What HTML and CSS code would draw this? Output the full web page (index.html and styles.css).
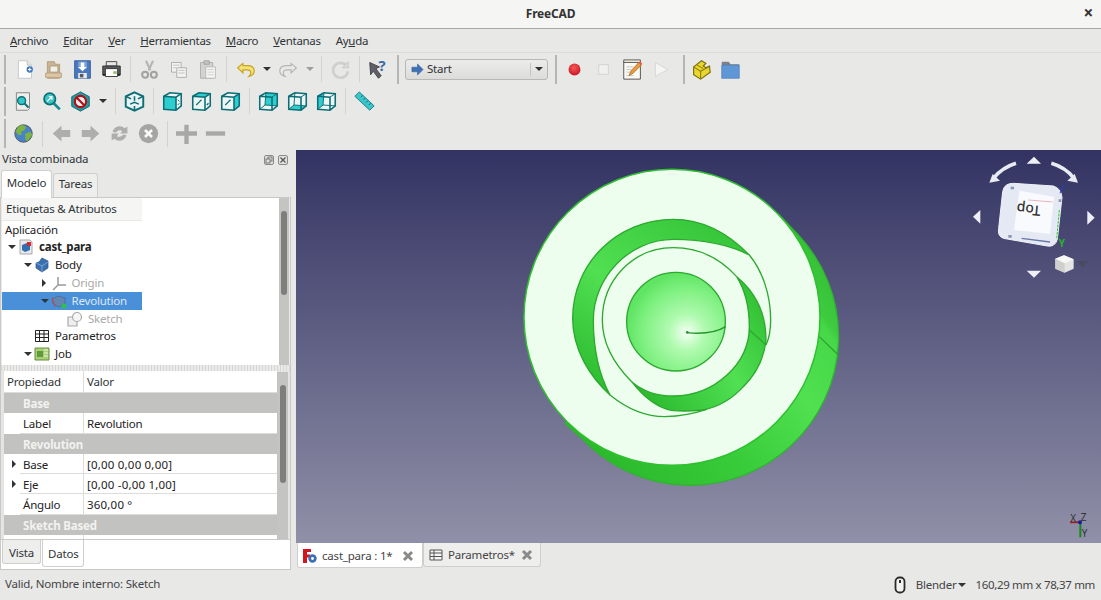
FILE: index.html
```html
<!DOCTYPE html>
<html lang="es">
<head>
<meta charset="utf-8">
<title>FreeCAD</title>
<link rel="stylesheet" href="styles.css">
</head>
<body>
<header class="titlebar"><span class="title">FreeCAD</span><span class="close">×</span></header>
<nav class="menubar">
  <span class="menu"><u>A</u>rchivo</span><span class="menu"><u>E</u>ditar</span><span class="menu"><u>V</u>er</span><span class="menu"><u>H</u>erramientas</span><span class="menu"><u>M</u>acro</span><span class="menu"><u>V</u>entanas</span><span class="menu">Ay<u>u</u>da</span>
</nav>

<div class="toolrow r1">
  <i class="handle"></i>
  <span class="tb"><svg viewBox="0 0 24 24"><path d="M5 2h10l5 5v15H5z" fill="#fff" stroke="#c4c4c4"/><path d="M15 2v5h5" fill="#e4e4e4" stroke="#c4c4c4"/><circle cx="18" cy="12" r="3.6" fill="#3f76c4"/><path d="M16 12h4M18 10v4" stroke="#fff" stroke-width="1.2"/></svg></span>
  <span class="tb"><svg viewBox="0 0 24 24"><path d="M5 3h8l1 3h5v16H5z" fill="#c9b391" stroke="#b09a78"/><path d="M8 8h9v7H8z" fill="#f0efe8" stroke="#a89878"/><path d="M3 16h18v5H3z" fill="#dcc7a4" stroke="#b5a07c"/></svg></span>
  <span class="tb"><svg viewBox="0 0 24 24"><path d="M3 2h18v20H3z" fill="#4a78bd" stroke="#2f5a9c"/><path d="M7 3h10v8H7z" fill="#7fa3d8"/><path d="M10 4h4v5h3l-5 5-5-5h3z" fill="#fff"/><path d="M7 16h10v6H7z" fill="#e6e6e6"/><path d="M9 17h4v4H9z" fill="#55595e"/></svg></span>
  <span class="tb"><svg viewBox="0 0 24 24"><path d="M6 3h12v5H6z" fill="#e6e6e6" stroke="#3a3a3a"/><path d="M2 8h20v10H2z" fill="#56595a" stroke="#2d2d2d"/><path d="M5 11h14v9H5z" fill="#fff" stroke="#2d2d2d"/><path d="M2 18h3M19 18h3" stroke="#222" stroke-width="2"/><path d="M14 14h4v3h-4z" fill="#9dbb6a"/></svg></span>
  <i class="sep"></i>
  <span class="tb"><svg viewBox="0 0 24 24"><path d="M8 2l5 11M16 2l-5 11" stroke="#b4b4b2" stroke-width="2.4" fill="none"/><circle cx="7" cy="18" r="3.4" fill="none" stroke="#a2a2a0" stroke-width="2.4"/><circle cx="17" cy="18" r="3.4" fill="none" stroke="#a2a2a0" stroke-width="2.4"/></svg></span>
  <span class="tb"><svg viewBox="0 0 24 24"><path d="M4 4h11v11H4z" fill="#f3f3f2" stroke="#a8a8a6"/><path d="M10 10h11v11H10z" fill="#f3f3f2" stroke="#a8a8a6"/><path d="M6 7h7M6 10h3M12 13h7M12 16h7" stroke="#bdbdbb"/></svg></span>
  <span class="tb"><svg viewBox="0 0 24 24"><path d="M4 4h14v18H4z" fill="#d2d2d0" stroke="#acacaa"/><path d="M8 2h6v4H8z" fill="#c4c4c2" stroke="#a2a2a0"/><path d="M10 9h11v13H10z" fill="#f5f5f4" stroke="#b6b6b4"/><path d="M12 12h7M12 15h7M12 18h7" stroke="#c9c9c7"/></svg></span>
  <i class="sep"></i>
  <span class="tb"><svg viewBox="0 0 24 24"><path d="M9 5L3 10l6 6v-3.500h5c3 0 4 1.500 4 3.500 0 2-1 3-2 4 4-1 6-3 6-6.500 0-3.500-3-6-8-6H9z" fill="#f4e27a" stroke="#c9a21e" stroke-width="1.300"/></svg></span>
  <span class="dropbtn d14"><i class="caret"></i></span>
  <span class="tb"><svg viewBox="0 0 24 24"><path d="M15 5l6 5-6 6v-3.500h-5c-3 0-4 1.500-4 3.500 0 2 1 3 2 4-4-1-6-3-6-6.500 0-3.500 3-6 8-6h5z" fill="#e9e9e8" stroke="#b5b5b3" stroke-width="1.300"/></svg></span>
  <span class="dropbtn d14"><i class="caret soft"></i></span>
  <i class="sep"></i>
  <span class="tb"><svg viewBox="0 0 24 24"><path d="M19 8a8.500 8.500 0 1 0 1.500 6" fill="none" stroke="#cfcfcd" stroke-width="3"/><path d="M21 3v7h-7z" fill="#dcdcda" stroke="#bdbdbb" stroke-width=".7"/></svg></span>
  <i class="sep"></i>
  <span class="tb"><svg viewBox="0 0 24 24"><path d="M2 4l11 5-4 2 6 8-3 3-6-8-3 4z" fill="#5d6268" stroke="#3a3d42"/><text class="qm" x="12" y="14">?</text></svg></span>
  <i class="sep wide"></i>
  <div class="combo">
    <svg class="combo-ic" viewBox="0 0 14 14"><path d="M1 4.500h6V1l6 6-6 6V9.500H1z" fill="#3f72b5" stroke="#305c96" stroke-width=".6"/></svg>
    <span class="combo-text">Start</span>
    <span class="combo-arrow"><i class="caret"></i></span>
  </div>
  <i class="sep wide"></i>
  <span class="tb"><svg viewBox="0 0 24 24"><defs><radialGradient id="rec" cx=".45" cy=".35" r=".7"><stop offset="0" stop-color="#f45a5a"/><stop offset="1" stop-color="#c8101c"/></radialGradient></defs><circle cx="12" cy="12" r="6.800" fill="url(#rec)"/></svg></span>
  <span class="tb"><svg viewBox="0 0 24 24"><path d="M6.500 6.500h11v11h-11z" fill="#f0f0ef" stroke="#d0d0ce"/></svg></span>
  <span class="tb"><svg viewBox="0 0 24 24"><path d="M2 3h19v20H2z" fill="#fafaf6" stroke="#44423c"/><path d="M2 1h19v3H2z" fill="#e9e5d8" stroke="#55524a"/><path d="M5 9h8M5 12h6M5 15h5M5 19h8" stroke="#bfbfb8"/><path d="M8 19l2-5 9-10 3 3-9 9z" fill="#ea9a3e" stroke="#a9641c" stroke-width=".8"/><path d="M19 4l2-1.500 2 3-1 1.500z" fill="#e8544d"/></svg></span>
  <span class="tb"><svg viewBox="0 0 24 24"><path d="M5 4l14 8-14 8z" fill="#f5f5f4" stroke="#d4d4d2"/></svg></span>
  <i class="sep wide far"></i>
  <span class="tb"><svg viewBox="0 0 24 24"><path d="M3 9l9-7 5 3-3 3 3 2 4-2 1 7-11 8-8-5z" fill="#e9d62f" stroke="#7a6c0c" stroke-width="1.300"/><path d="M3 9l8 5v9M11 14l11-6M7 7l7 4" stroke="#8b7c10" stroke-width="1.200" fill="none"/></svg></span>
  <span class="tb"><svg viewBox="0 0 24 24"><path d="M2 3h8l2 3h10v16H2z" fill="#7c7f86"/><path d="M2 7h20v15H2z" fill="#5f97d6" stroke="#4a7fba" stroke-width=".7"/></svg></span>
</div>

<div class="toolrow r2">
  <i class="handle"></i>
  <span class="tb"><svg viewBox="0 0 24 24"><path d="M5 2h15v18l-2 2H5z" fill="#eeeeec" stroke="#7a7a78"/><circle cx="11" cy="11" r="4.500" fill="#37c6c6" stroke="#0d6f76" stroke-width="1.600"/><path d="M14 14l5 5" stroke="#0d6f76" stroke-width="2.400"/></svg></span>
  <span class="tb"><svg viewBox="0 0 24 24"><circle cx="10" cy="9" r="6.500" fill="#3bc7c7" stroke="#0d6f76" stroke-width="2"/><path d="M14.500 14l7 7" stroke="#118a90" stroke-width="3"/><path d="M7 12l5-5M9 6.500h3.500V10" stroke="#f1f1f1" stroke-width="1.500" fill="none"/></svg></span>
  <span class="tb"><svg viewBox="0 0 24 24"><path d="M12 1l10 5.500v11L12 23 2 17.500v-11z" fill="#1e9da3" stroke="#0b5f66"/><circle cx="12" cy="12" r="6.500" fill="#eee" stroke="#b0121a" stroke-width="2.500"/><path d="M7.500 7.500l9 9" stroke="#b0121a" stroke-width="2.500"/></svg></span>
  <span class="dropbtn d16"><i class="caret"></i></span>
  <i class="sep"></i>
  <span class="tb"><svg viewBox="0 0 24 24"><path d="M12 1.500l10 4.500v12L12 22.500 2 18V6z" fill="#e9f3f3" stroke="#0d6f76" stroke-width="2.200"/><path d="M2 6l6 3M22 6l-6 3M12 22.500V17M12 6v5M7 15l5-2 5 2" stroke="#0d6f76" stroke-width="1.800" fill="none"/></svg></span>
  <i class="sep"></i>
  <span class="tb"><svg viewBox="0 0 24 24"><path d="M2 6l7-4 13 1v14l-6 5-14-1z" fill="#eef5f5"/><path d="M2 6l14 1v15l-14-1z" fill="#2ecdd0"/><path d="M2 6l7-4 13 1v14l-6 5-14-1zM2 6l14 1v15M16 7l6-4" stroke="#0d6f76" stroke-width="1.800" fill="none"/><path d="M18 16l2-2M18 10l2 2" stroke="#0d6f76"/></svg></span>
  <span class="tb"><svg viewBox="0 0 24 24"><path d="M2 6l7-4 13 1v14l-6 5-14-1z" fill="#eef5f5"/><path d="M2 6l7-4 13 1-6 4z" fill="#2ecdd0"/><path d="M6 16l3-3M12 10l-3 3M18 16l2-2" stroke="#0d6f76" stroke-width="1.500"/><path d="M2 6l7-4 13 1v14l-6 5-14-1zM2 6l14 1v15M16 7l6-4" stroke="#0d6f76" stroke-width="1.800" fill="none"/></svg></span>
  <span class="tb"><svg viewBox="0 0 24 24"><path d="M2 6l7-4 13 1v14l-6 5-14-1z" fill="#eef5f5"/><path d="M16 7l6-4v14l-6 5z" fill="#2ecdd0"/><path d="M6 16l3-3M12 10l-3 3" stroke="#0d6f76" stroke-width="1.500"/><path d="M2 6l7-4 13 1v14l-6 5-14-1zM2 6l14 1v15M16 7l6-4" stroke="#0d6f76" stroke-width="1.800" fill="none"/></svg></span>
  <i class="sep"></i>
  <span class="tb"><svg viewBox="0 0 24 24"><path d="M2 6l7-4 13 1v14l-6 5-14-1z" fill="#eef5f5"/><path d="M9 2l13 1v14L8 16z" fill="#2ecdd0"/><path d="M2 6l7-4 13 1v14l-6 5-14-1zM2 6l14 1v15" stroke="#0d6f76" stroke-width="1.800" fill="none"/><path d="M9 2l-1 14 14 1M8 16l-6 5M16 7l6-4" stroke="#0d6f76" stroke-width="1.100" fill="none"/></svg></span>
  <span class="tb"><svg viewBox="0 0 24 24"><path d="M2 6l7-4 13 1v14l-6 5-14-1z" fill="#eef5f5"/><path d="M8 16l14 1-6 5-14-1z" fill="#2ecdd0"/><path d="M2 6l7-4 13 1v14l-6 5-14-1zM2 6l14 1v15" stroke="#0d6f76" stroke-width="1.800" fill="none"/><path d="M9 2l-1 14 14 1M8 16l-6 5M16 7l6-4" stroke="#0d6f76" stroke-width="1.100" fill="none"/></svg></span>
  <span class="tb"><svg viewBox="0 0 24 24"><path d="M2 6l7-4 13 1v14l-6 5-14-1z" fill="#eef5f5"/><path d="M2 6l7-4-1 14-6 5z" fill="#2ecdd0"/><path d="M2 6l7-4 13 1v14l-6 5-14-1zM2 6l14 1v15" stroke="#0d6f76" stroke-width="1.800" fill="none"/><path d="M9 2l-1 14 14 1M8 16l-6 5M16 7l6-4" stroke="#0d6f76" stroke-width="1.100" fill="none"/></svg></span>
  <i class="sep"></i>
  <span class="tb"><svg viewBox="0 0 24 24"><path d="M6 1l17 16-5 5L1 6z" fill="#39c5c9" stroke="#117a80"/><path d="M8 7l2-2M11 10l2-2M14 13l2-2M17 16l2-2" stroke="#0d5f66"/></svg></span>
</div>

<div class="toolrow r3">
  <i class="handle"></i>
  <span class="tb"><svg viewBox="0 0 24 24"><circle cx="12" cy="12" r="10" fill="#4a82c8" stroke="#555"/><path d="M6 4c3-2 7-2 9 1l-3 4-3 1 1 3-3 1-4-4zM14 12l6-2 2 4-6 7-2-3z" fill="#7cb342"/></svg></span>
  <i class="sep"></i>
  <span class="tb"><svg viewBox="0 0 24 24"><path d="M2 12l10-9v5h10v8H12v5z" fill="#aeaeac"/></svg></span>
  <span class="tb"><svg viewBox="0 0 24 24"><path d="M22 12l-10-9v5H2v8h10v5z" fill="#aeaeac"/></svg></span>
  <span class="tb"><svg viewBox="0 0 24 24"><path d="M4 10a8.500 8.500 0 0 1 14-4l3-2v8h-8l2-3a5 5 0 0 0-7 2zM20 14a8.500 8.500 0 0 1-14 4l-3 2v-8h8l-2 3a5 5 0 0 0 7-2z" fill="#aeaeac"/></svg></span>
  <span class="tb"><svg viewBox="0 0 24 24"><circle cx="12" cy="12" r="11" fill="#a5a5a3"/><path d="M8 8l8 8M16 8l-8 8" stroke="#fafafa" stroke-width="3"/></svg></span>
  <i class="sep"></i>
  <span class="tb"><svg viewBox="0 0 24 24"><path d="M9.500 2h5v7.500H24v5h-9.500V24h-5v-9.500H0v-5h9.500z" fill="#a8a8a6"/></svg></span>
  <span class="tb"><svg viewBox="0 0 24 24"><path d="M1 9.500h22v5H1z" fill="#a8a8a6"/></svg></span>
</div>

<main class="workspace">
  <aside class="leftpanel">
    <div class="dock-title"><span>Vista combinada</span>
      <span class="dock-btns">
        <svg viewBox="0 0 10 10"><rect x=".5" y=".5" width="9" height="9" rx="1.500" fill="#e2e2e0" stroke="#8a8a88"/><rect x="4" y="2" width="4" height="4" fill="none" stroke="#777"/><rect x="2" y="4" width="4" height="4" fill="#e2e2e0" stroke="#777"/></svg>
        <svg viewBox="0 0 10 10"><rect x=".5" y=".5" width="9" height="9" rx="1.500" fill="#e2e2e0" stroke="#8a8a88"/><path d="M2.500 2.500l5 5M7.500 2.500l-5 5" stroke="#555" stroke-width="1.200"/></svg>
      </span>
    </div>
    <div class="toptabs"><span class="tab on">Modelo</span><span class="tab">Tareas</span></div>
    <div class="panelbody">
      <section class="treebox">
        <div class="tree">
          <div class="treehead">Etiquetas &amp; Atributos</div>
          <div class="tree-root">Aplicación</div>
          <div class="node l0"><i class="tw down"></i><svg class="ni" viewBox="0 0 16 16"><path d="M2 1h10l2 2v12H2z" fill="#e8e8e8" stroke="#aaa"/><path d="M4 6l5-2 3 2v5l-5 2-3-2z" fill="#2f6fb3"/><path d="M9 3h4v4H9z" fill="#d8262c"/></svg><b>cast_para</b></div>
          <div class="node l1"><i class="tw down"></i><svg class="ni" viewBox="0 0 16 16"><path d="M8 1l6 3v7l-6 4-6-4V6l3-1z" fill="#3a70b0" stroke="#27528a" stroke-width=".7"/><path d="M2 6l6 3 6-4M8 9v6" stroke="#8fb0d8" fill="none" stroke-width=".8"/></svg>Body</div>
          <div class="node l2 dim"><i class="tw right"></i><svg class="ni" viewBox="0 0 16 16"><path d="M7 2v8M7 10H15M7 10L2 15" stroke="#9a9a9a" stroke-width="1.500" fill="none"/></svg>Origin</div>
          <div class="node l2 sel"><i class="tw down"></i><svg class="ni" viewBox="0 0 16 16"><path d="M1 6l6-3 7 2v6l-6 3-6-3z" fill="#6485b0" stroke="#44648f" stroke-width=".7"/><path d="M1 4l3 10" stroke="#c8494f"/><circle cx="13" cy="13" r="2.500" fill="#2fc04e"/></svg>Revolution</div>
          <div class="node l3 dim"><i class="tw"></i><svg class="ni" viewBox="0 0 16 16"><path d="M1 6h9v9H1z" fill="#eee" stroke="#aaa" stroke-width="1.200"/><circle cx="10" cy="6" r="4.500" fill="#f6f6f6" stroke="#aaa" stroke-width="1.200"/></svg>Sketch</div>
          <div class="node l1"><i class="tw"></i><svg class="ni" viewBox="0 0 16 16"><path d="M1.500 2.500h13v11h-13zM1.500 6h13M1.500 9.500h13M5.500 2.500v11M10 2.500v11" fill="#fff" stroke="#222"/></svg>Parametros</div>
          <div class="node l1"><i class="tw down"></i><svg class="ni" viewBox="0 0 16 16"><path d="M1 2h14v12H1z" fill="#a8cf74" stroke="#6b8d44"/><path d="M3 5h6v6H3z" fill="#5f9a3c"/><path d="M10 4h4M10 7h4M10 10h4" stroke="#eef5df"/></svg>Job</div>
        </div>
        <div class="sbar tree-sbar"><i class="thumb"></i></div>
      </section>
      <div class="splitter"></div>
      <section class="propbox">
        <div class="props">
          <div class="prow head"><span class="pk">Propiedad</span><span class="pv">Valor</span></div>
          <div class="pgroup">Base</div>
          <div class="prow"><span class="pk in">Label</span><span class="pv">Revolution</span></div>
          <div class="pgroup">Revolution</div>
          <div class="prow"><span class="pk in"><i class="tw right small"></i>Base</span><span class="pv num">[0,00 0,00 0,00]</span></div>
          <div class="prow"><span class="pk in"><i class="tw right small"></i>Eje</span><span class="pv num">[0,00 -0,00 1,00]</span></div>
          <div class="prow"><span class="pk in">Ángulo</span><span class="pv num">360,00 °</span></div>
          <div class="pgroup">Sketch Based</div>
          <div class="prow stub"><span class="pk"></span><span class="pv"></span></div>
        </div>
        <div class="sbar prop-sbar"><i class="thumb"></i></div>
      </section>
      <div class="bottomtabs"><span class="btab">Vista</span><span class="btab on">Datos</span></div>
    </div>
  </aside>

  <section class="center">
    <svg class="scene" viewBox="296 150 805 393" preserveAspectRatio="none">
      <defs>
        <linearGradient id="bg" x1="0" y1="0" x2="0" y2="1"><stop offset="0" stop-color="#333363"/><stop offset="1" stop-color="#9090a8"/></linearGradient>
        <linearGradient id="side" gradientUnits="userSpaceOnUse" x1="200" y1="840" x2="980" y2="230"><stop offset="0" stop-color="#2bb82b"/><stop offset=".35" stop-color="#38cc3a"/><stop offset=".62" stop-color="#50e050"/><stop offset=".8" stop-color="#46d848"/><stop offset=".82" stop-color="#3ecb40"/><stop offset="1" stop-color="#2fb82f"/></linearGradient>
        <linearGradient id="band" gradientUnits="userSpaceOnUse" x1="300" y1="700" x2="650" y2="190"><stop offset="0" stop-color="#2fbd31"/><stop offset=".45" stop-color="#50e052"/><stop offset="1" stop-color="#35c438"/></linearGradient>
        <linearGradient id="band2" gradientUnits="userSpaceOnUse" x1="380" y1="680" x2="760" y2="450"><stop offset="0" stop-color="#2cb92e"/><stop offset=".6" stop-color="#50e052"/><stop offset="1" stop-color="#34c136"/></linearGradient>
        <radialGradient id="ball" gradientUnits="userSpaceOnUse" cx="530" cy="518" r="180"><stop offset="0" stop-color="#f5fff5"/><stop offset=".3" stop-color="#b0fab0"/><stop offset=".75" stop-color="#7df07f"/><stop offset="1" stop-color="#5fe463"/></radialGradient>
      </defs>
      <rect x="296" y="150" width="805" height="393" fill="url(#bg)"/>
      <g transform="translate(510 160) scale(.33333)" stroke-linejoin="round">
        <path d="M805 162L865 225A444 444 0 1 1 215 835L165 790Z" fill="url(#side)" stroke="#2fb52f" stroke-width="4"/>
        <path d="M928 530L988 588" stroke="#2aa02c" stroke-width="3.500"/>
        <circle cx="486" cy="472" r="444" fill="#edfdee" stroke="#2ec02e" stroke-width="4.500"/>
        <path d="M718 285C650 215 570 178 490 178C322 178 188 310 188 475C188 570 240 650 300 705C265 640 250 560 250 480C250 350 360 238 490 238C575 238 650 250 718 285Z" fill="url(#band)" stroke="#2ca92e" stroke-width="4"/>
        <path d="M680 350C735 395 768 460 768 540Q760 620 700 680Q650 735 580 750Q530 755 490 752C440 745 400 710 365 665C400 695 440 708 490 708C615 708 718 610 718 500C718 440 705 390 680 350Z" fill="url(#band2)" stroke="#2ca92e" stroke-width="4"/>
        <path d="M718 510L768 555" stroke="#2ca92e" stroke-width="4"/>
        <path d="M365 665C310 610 277 550 277 480C277 360 370 263 490 263C570 263 635 300 680 350" fill="none" stroke="#2ca92e" stroke-width="4"/>
        <path d="M718 285C755 330 782 400 782 480Q782 525 768 555" fill="none" stroke="#2ca92e" stroke-width="4"/>
        <path d="M300 705Q380 770 465 770Q530 768 590 748" fill="none" stroke="#2ca92e" stroke-width="4"/>
        <circle cx="498" cy="485" r="148" fill="url(#ball)" stroke="#2ca92e" stroke-width="4"/>
        <path d="M530 518C570 522 615 520 647 500" fill="none" stroke="#24962a" stroke-width="4"/>
        <circle cx="532" cy="517" r="4" fill="#24962a"/>
      </g>
      <g transform="translate(960 150) scale(.33333)">
        <path d="M168 40Q128 52 100 85" fill="none" stroke="#e8ebf2" stroke-width="11"/>
        <path d="M88 98L98 72L120 92Z" fill="#e8ebf2"/>
        <path d="M274 40Q316 52 342 85" fill="none" stroke="#e8ebf2" stroke-width="11"/>
        <path d="M354 98L344 72L322 92Z" fill="#e8ebf2"/>
        <path d="M222 20L243 41H200Z" fill="#eef0f5"/>
        <path d="M39 200L61 180V221Z" fill="#eef0f5"/>
        <path d="M404 203L382 182V224Z" fill="#eef0f5"/>
        <path d="M222 383L200 362H243Z" fill="#eef0f5"/>
        <path d="M160 100L280 108Q304 116 306 142L292 268Q285 292 262 288L130 265Q112 258 116 235L128 125Q132 100 160 100Z" fill="#e4e9f3" stroke="#f0f2f8" stroke-width="3"/>
        <path d="M178 122L282 140L270 252L162 240Z" fill="#f8fafd"/>
        <path d="M205 150L278 156" stroke="#eab4ba" stroke-width="3"/>
        <path d="M298 180L290 268" stroke="#36c53a" stroke-width="3" stroke-dasharray="8 3"/>
        <path d="M300 130L310 105" stroke="#2a3fd0" stroke-width="3"/>
        <path d="M185 265L270 276" stroke="#6a78a8" stroke-width="4"/>
        <path d="M152 110h10v8h-10zM296 148h8v8h-8zM145 255h10v8h-10z" fill="#8a94b4"/>
        <text class="cube-top" transform="translate(207 164) rotate(186) scale(3)">Top</text>
        <text class="cube-y" x="296" y="290">Y</text>
        <path d="M286 326L312 316L341 328V356L314 368L286 356Z" fill="#e4e4e2"/>
        <path d="M286 326L312 316L341 328L314 340Z" fill="#f8f8f6"/>
        <path d="M314 340V368L286 356V326Z" fill="#cfcfcd"/>
        <path d="M350 333H385L367 352Z" fill="#4a4a60"/>
      </g>
      <g transform="translate(880 510) scale(.33333)">
        <path d="M570 37H600" stroke="#a01a1a" stroke-width="5"/>
        <path d="M601 38V82" stroke="#158a1c" stroke-width="6"/>
        <circle cx="600" cy="37" r="6" fill="#1c1c9c"/>
        <text class="ax" x="571" y="37">X</text>
        <text class="ax" x="602" y="34">Z</text>
        <text class="ax" x="605" y="82">Y</text>
      </g>
    </svg>
    <div class="doctabs">
      <span class="dtab on"><svg class="dic" viewBox="0 0 14 14"><path d="M0 0h8v3H4v2.500h3v3H4V14H0z" fill="#d2161c"/><circle cx="9.500" cy="9.500" r="4.200" fill="#3e6fb5"/><circle cx="9.500" cy="9.500" r="1.400" fill="#fff"/></svg><span class="dname">cast_para : 1*</span><svg class="dx" viewBox="0 0 12 12"><path d="M2 2l8 8M10 2l-8 8" stroke="#8a8a88" stroke-width="3"/></svg></span>
      <span class="dtab"><svg class="dic" viewBox="0 0 14 14"><path d="M1 2h12v10H1zM1 5h12M1 8.500h12M5 2v10" fill="#f5f5f5" stroke="#555"/></svg><span class="dname">Parametros*</span><svg class="dx" viewBox="0 0 12 12"><path d="M2 2l8 8M10 2l-8 8" stroke="#8a8a88" stroke-width="3"/></svg></span>
    </div>
  </section>
</main>

<footer class="statusbar">
  <span class="msg">Valid, Nombre interno: Sketch</span>
  <svg class="mouse" viewBox="0 0 12 18"><rect x="1.500" y="1.500" width="9" height="15" rx="4" fill="#f2f2f0" stroke="#2c2c2c" stroke-width="1.800"/><path d="M6 4v3" stroke="#2c2c2c" stroke-width="2"/></svg>
  <span class="nav">Blender<i class="caret"></i></span>
  <span class="dim-text">160,29 mm x 78,37 mm</span>
</footer>
</body>
</html>
```
FILE: styles.css
```css
* { box-sizing: border-box; }
html, body { margin: 0; height: 100%; }
body {
  width: 1101px; height: 600px; overflow: hidden;
  background: #e8e8e7; color: #2e3436;
  font: 11.500px/16px "Noto Sans", "Open Sans", sans-serif;
  letter-spacing: -.2px;
  display: flex; flex-direction: column;
}
i { display: block; font-style: normal; }

.titlebar {
  height: 29px; flex: none; display: flex; align-items: center; justify-content: center;
  position: relative; background: #f5f5f4; border-bottom: 1px solid #a8a8a6;
}
.title { font-size: 12px; font-weight: 700; color: #333; }
.close { position: absolute; right: 8px; top: 5px; font-size: 17px; font-weight: 700; color: #333; }

.menubar {
  height: 24px; flex: none; display: flex; align-items: center; padding-left: 2.500px;
  border-bottom: 1px solid #dcdcda; letter-spacing: -.3px;
}
.menu { padding: 0 7.500px; }

.toolrow { flex: none; display: flex; align-items: center; padding-left: 4px; }
.r1 { height: 32px; }
.r2 { height: 32px; }
.r3 { height: 33px; }
.handle { width: 2px; height: 29px; background: #b5b5b3; margin-right: 2px; }
.r1 .handle { margin-right: 4px; }
.r3 .handle { margin-right: 3px; }
.tb { width: 29px; height: 32px; flex: none; display: flex; align-items: center; justify-content: center; }
.tb svg { width: 21px; height: 21px; overflow: visible; }
.qm { font: 700 17px "Noto Sans", sans-serif; fill: #3b6ea8; }
.sep { width: 9px; height: 26px; flex: none; background: linear-gradient(#d2d2d0, #d2d2d0) center / 1px 100% no-repeat; }
.sep.wide { height: 29px; background-image: linear-gradient(#b5b5b3, #b5b5b3); background-size: 2px 100%; }
.sep.far { width: 11px; background-position: 7px 50%; }
.dropbtn { height: 32px; flex: none; display: flex; align-items: center; justify-content: center; }
.d14 { width: 14px; }
.d16 { width: 16px; }
.caret { width: 0; height: 0; border-style: solid; border-width: 4px 4px 0; border-color: #2e3436 transparent transparent; }
.caret.soft { border-top-color: #9e9e9c; }

.combo {
  width: 143px; height: 21px; flex: none; margin: 0 3px 0 3px;
  display: flex; align-items: center; padding-left: 5px;
  border: 1px solid #b8b8b6; border-radius: 3px;
  background: linear-gradient(#ececeb, #dcdcdb);
}
.combo-ic { width: 13px; height: 13px; margin-right: 3px; }
.combo-text { flex: 1; }
.combo-arrow { width: 17px; height: 13px; border-left: 1px solid #c4c4c2; display: flex; align-items: center; justify-content: center; }

.workspace { flex: 1; min-height: 0; display: flex; }
.leftpanel { width: 291px; flex: none; display: flex; flex-direction: column; }
.dock-title { height: 20px; flex: none; display: flex; align-items: center; justify-content: space-between; padding: 0 2px 2px 2px; }
.dock-btns { display: flex; gap: 4px; margin-right: 1px; margin-top: 2px; }
.dock-btns svg { width: 10px; height: 10px; }
.toptabs { height: 27px; flex: none; display: flex; align-items: flex-end; padding-left: 1px; gap: 1px; position: relative; z-index: 1; }
.tab { height: 24px; width: 45px; text-align: center; padding-top: 2px; background: #eeeeed; border: 1px solid #cfcfcd; border-bottom: 0; border-radius: 3px 3px 0 0; }
.tab.on { height: 28px; margin-bottom: -1px; padding-top: 4px; background: #fff; width: 51px; }
.panelbody { flex: 1; min-height: 0; background: #fff; border: 1px solid #c9c9c7; display: flex; flex-direction: column; }

.treebox { height: 167px; flex: none; display: flex; padding-left: 1px; padding-right: 1px; background: #eaeae9; }
.tree { width: 277px; background: #fff; overflow: hidden; }
.treehead { width: 140px; height: 23px; padding: 3px 0 0 4px; background: #f5f5f4; border-bottom: 1px solid #e8e8e7; }
.tree-root { height: 17.500px; padding: 1px 0 0 3px; color: #222; }
.node { height: 17.8px; display: flex; align-items: center; color: #222; width: 140px; white-space: nowrap; }
.node b { font-weight: 700; }
.l0 { padding-left: 4px; }
.l1 { padding-left: 20px; }
.l2 { padding-left: 36.500px; }
.l3 { padding-left: 53px; }
.tw { width: 12px; height: 8px; flex: none; position: relative; }
.tw.down::before, .tw.right::before { content: ""; position: absolute; left: 2px; top: 0; border-style: solid; border-color: transparent; }
.tw.down::before { border-width: 4.500px 4.500px 0; border-top-color: #2e3436; top: 2px; }
.tw.right::before { border-width: 4px 0 4px 4.500px; border-left-color: #2e3436; left: 3px; }
.tw.small { position: absolute; left: -11px; top: 6px; }
.ni { width: 16px; height: 16px; flex: none; margin-right: 5px; }
.dim { color: #a9a9a7; }
.sel { background: #4a90d9; color: #dfe7f5; }

.sbar { flex: none; background: #c4c4c2; position: relative; display: flex; justify-content: center; }
.tree-sbar { width: 10px; }
.prop-sbar { width: 11px; margin-top: 1px; }
.thumb { width: 6px; background: #7d7f7d; border-radius: 3px; }
.tree-sbar .thumb { height: 84px; margin-top: 13px; }
.prop-sbar .thumb { height: 98px; margin-top: 13px; }

.splitter {
  height: 6px; flex: none;
  background: #eaeae9 repeating-linear-gradient(90deg, #d6d6d4 0 1px, transparent 1px 3px);
}
.propbox { height: 169px; flex: none; display: flex; padding-left: 3px; padding-right: 2px; background: #e4e4e3; border-bottom: 1px solid #c9c9c7; }
.props { width: 273px; background: #fff; overflow: hidden; }
.prow { height: 20.250px; display: flex; color: #222; }
.prow.head { color: #2e3436; height: 22px; border-bottom: 1px solid #dcdcda; }
.prow.stub { height: 6px; }
.pk { width: 80px; flex: none; position: relative; display: flex; align-items: center; padding: 3px 0 0 16px; border-right: 1px solid #dcdcda; border-bottom: 1px solid #dcdcda; }
.pk.in { margin-left: 16px; width: 64px; padding-left: 3px; }
.head .pk { padding: 1px 0 0 3px; border-bottom: 0; }
.pv { flex: 1; display: flex; align-items: center; padding: 3px 0 0 3px; border-bottom: 1px solid #dcdcda; }
.pv.num { letter-spacing: .2px; }
.head .pv { padding-top: 1px; border-bottom: 0; }
.pgroup { height: 20.250px; background: #c2c2c0; color: #f2f2f0; font-weight: 700; padding: 3px 0 0 19px; }

.bottomtabs { flex: 1; display: flex; align-items: flex-start; padding-left: 1px; position: relative; }
.btab { height: 24px; padding: 5px 0 0 6px; width: 39px; background: #eeeeed; border: 1px solid #cfcfcd; border-top: 0; border-radius: 0 0 3px 3px; }
.btab.on { width: 42px; height: 27px; background: #fff; padding: 6px 0 0 5px; margin-left: 1px; }

.center { flex: 1; min-width: 0; margin-left: 5px; display: flex; flex-direction: column; }
.scene { width: 805px; height: 393px; flex: none; display: block; }
.cube-top { font: 500 14px "Noto Sans", sans-serif; fill: #333; text-anchor: middle; letter-spacing: 0; }
.cube-y { font: 700 30px "Noto Sans", sans-serif; fill: #24b42c; letter-spacing: 0; }
.ax { font: 30px "Noto Sans", sans-serif; fill: #333; letter-spacing: 0; }

.doctabs { height: 25px; flex: none; display: flex; align-items: flex-start; padding-left: 1px; }
.dtab { height: 24px; display: flex; align-items: center; background: #eeeeed; border: 1px solid #cfcfcd; border-top: 0; border-radius: 0 0 3px 3px; padding: 0 7px 0 5px; width: 118px; color: #444; }
.dtab.on { height: 25px; width: 126px; background: #fff; padding: 2px 8px 0 5px; }
.dic { width: 14px; height: 14px; flex: none; margin-right: 5px; }
.dname { flex: 1; }
.dx { width: 12px; height: 12px; flex: none; }

.statusbar { height: 30px; flex: none; display: flex; align-items: center; padding: 0 6px 0 5px; color: #444; }
.msg { flex: 1; padding-bottom: 2px; }
.mouse { width: 12px; height: 18px; margin-right: 10px; }
.nav { display: flex; align-items: center; gap: 1px; margin-right: 10px; }
.dim-text { white-space: nowrap; letter-spacing: -.35px; }
```
